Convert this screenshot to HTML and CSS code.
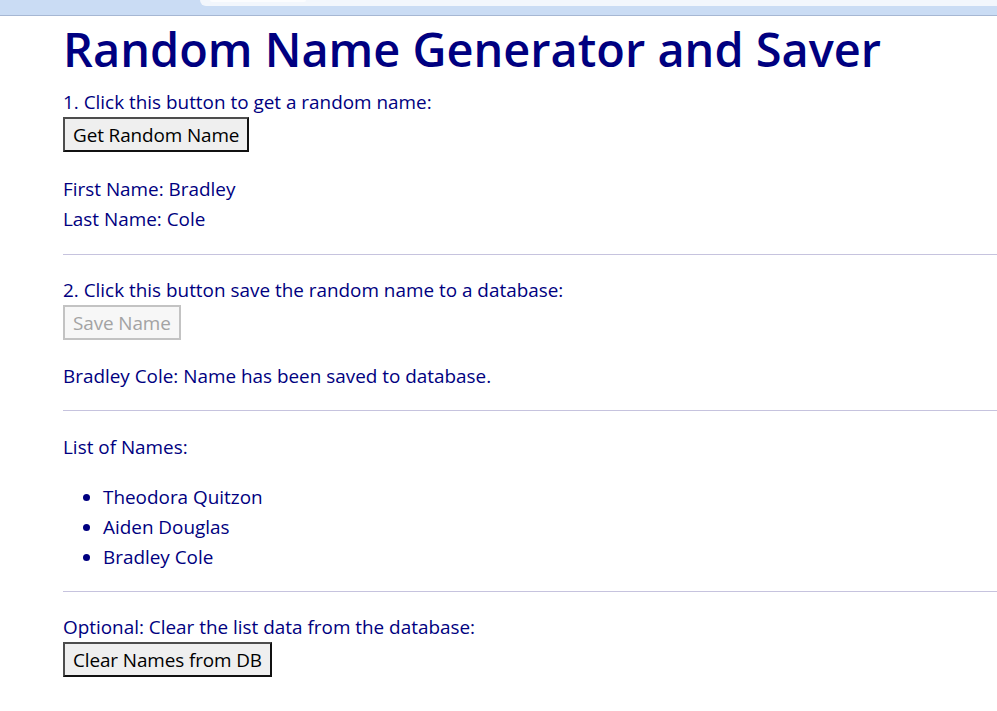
FILE: index.html
```html
<!DOCTYPE html>
<html lang="en">
<head>
<meta charset="utf-8">
<title>Random Name Generator and Saver</title>
<link rel="stylesheet" href="styles.css">
</head>
<body>
<div class="chrome">
  <div class="tab"><div class="tab-inner"></div></div>
</div>
<main class="page">
  <h1 class="title">Random Name Generator and Saver</h1>

  <div class="line">1. Click this button to get a random name:</div>
  <button class="btn" type="button">Get Random Name</button>
  <div class="line gap-after-btn">First Name: Bradley</div>
  <div class="line">Last Name: Cole</div>

  <hr class="rule rule-1">

  <div class="line">2. Click this button save the random name to a database:</div>
  <button class="btn" type="button" disabled>Save Name</button>
  <div class="line gap-after-save">Bradley Cole: Name has been saved to database.</div>

  <hr class="rule rule-2">

  <div class="line">List of Names:</div>
  <ul class="names">
    <li>Theodora Quitzon</li>
    <li>Aiden Douglas</li>
    <li>Bradley Cole</li>
  </ul>

  <hr class="rule rule-3">

  <div class="line">Optional: Clear the list data from the database:</div>
  <button class="btn" type="button">Clear Names from DB</button>
</main>
</body>
</html>
```
FILE: styles.css
```css
html, body {
  margin: 0;
  padding: 0;
  background: #ffffff;
}

body {
  font-family: "Open Sans", "Noto Sans", "Liberation Sans", sans-serif;
  color: #000080;
  overflow: hidden;
}

.chrome {
  height: 15px;
  background: #cadcf4;
  border-bottom: 1px solid #a6b7d3;
}

.tab {
  margin-left: 200px;
  height: 6px;
  background: #f2f6fc;
  border-bottom-left-radius: 7px;
}

.tab-inner {
  margin-left: 10px;
  width: 96px;
  height: 2px;
  background: #fbfcfe;
  border-bottom-left-radius: 2px;
  border-bottom-right-radius: 2px;
}

.page {
  padding-left: 63px;
}

.title {
  margin: 3px 0 0 0;
  font-size: 46.9px;
  line-height: 60px;
  font-weight: 600;
  color: #000080;
  height: 68px;
  white-space: nowrap;
}

.line {
  font-size: 18.9px;
  line-height: 30px;
  height: 30px;
  white-space: nowrap;
}

.btn {
  display: block;
  height: 35px;
  margin: 0;
  padding: 0 8px;
  font-family: inherit;
  font-size: 18.9px;
  letter-spacing: -0.1px;
  color: #000000;
  background: #efefef;
  border: 2px solid #111111;
  border-top-color: #4d4d4d;
  border-left-color: #4d4d4d;
  border-radius: 0;
}

.btn:disabled {
  color: #a3a3a3;
  background: #f7f7f7;
  border-color: #c3c3c3;
}

.gap-after-btn {
  margin-top: 22px;
}

.gap-after-save {
  margin-top: 21px;
}

.rule {
  border: 0;
  height: 1px;
  background: #c6c3de;
  margin: 20px 0 20px 0;
}

.rule-2 {
  margin-top: 19px;
  margin-bottom: 21px;
}

.rule-3 {
  margin-top: 19px;
}

.names {
  margin: 20px 0 0 0;
  padding-left: 40px;
  font-size: 18.9px;
  line-height: 30px;
}

.names li {
  height: 30px;
}
```
